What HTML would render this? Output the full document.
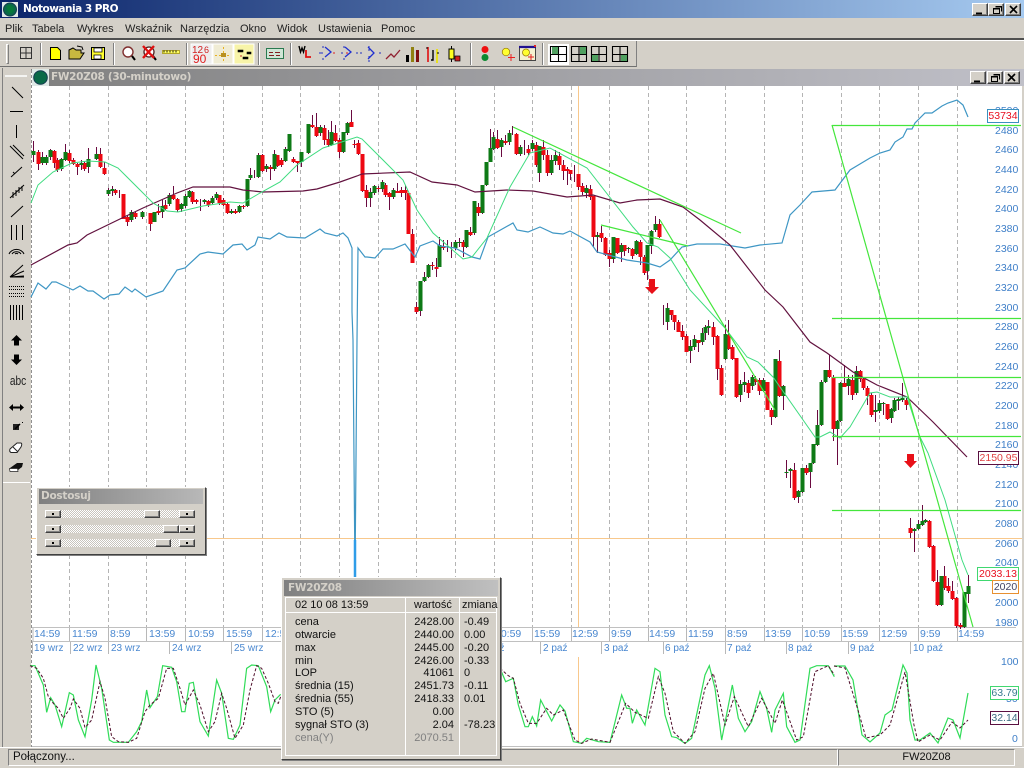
<!DOCTYPE html>
<html lang="pl"><head><meta charset="utf-8"><title>Notowania 3 PRO</title>
<style>
html,body{margin:0;padding:0;width:1024px;height:768px;overflow:hidden;background:#d4d0c8;font-family:"Liberation Sans",sans-serif}
div,span,svg{position:absolute;box-sizing:border-box}
.t{white-space:nowrap;line-height:13px}
.menu{font-size:11px;color:#222;top:23px}
.btn{width:16px;height:13px;background:#d4d0c8;border:1px solid;border-color:#fff #404040 #404040 #fff;box-shadow:inset -1px -1px 0 #808080}
.ax{font-size:10.5px;color:#3f7fc8;left:995px}
.tm{font-size:10.5px;color:#4a88d0;top:628px}
.dt{font-size:10px;color:#4a88d0;top:642px}
.box{font-size:10.5px;background:#fff;text-align:center;line-height:12px;height:14px}
.sep{width:2px;height:22px;top:43px;background:#808080;border-right:1px solid #fff}
.r{font-size:11px;color:#111;line-height:13px;white-space:nowrap}
.sb{height:8px;background:#d4d0c8;border:1px solid;border-color:#fff #404040 #404040 #fff;box-shadow:inset -1px -1px 0 #808080}
.trk{left:61px;width:118px;height:8px;background:conic-gradient(#fff 25%,#c8c4bc 0 50%,#fff 0 75%,#c8c4bc 0);background-size:2px 2px}
</style></head><body>

<!-- main title bar -->
<div style="left:0;top:0;width:1024px;height:18px;background:linear-gradient(90deg,#0a246a,#a6caf0)"></div>
<svg style="left:2px;top:2px" width="16" height="15" viewBox="0 0 16 15"><rect width="16" height="15" fill="#dfe9e6"/><circle cx="8" cy="7.5" r="6.5" fill="#0a6a48" stroke="#143c50"/><path d="M5 4l3-1 3 2 1 3-2 3-3 0-2-3z" fill="#067a3a"/></svg>
<div class="t" style="left:23px;top:3px;font:bold 10.5px 'DejaVu Sans',sans-serif;letter-spacing:-.5px;color:#fff;line-height:13px">Notowania 3 PRO</div>
<div class="btn" style="left:972px;top:3px"></div><div class="btn" style="left:988px;top:3px"></div><div class="btn" style="left:1005px;top:3px"></div>
<svg style="left:972px;top:3px" width="50" height="13" viewBox="0 0 50 13" fill="none" stroke="#000"><path d="M4 10.5h6" stroke-width="2"/><path d="M21.5 5.5h6v5h-6zM23.5 3.5h6v5M21.5 6h6M23.5 4h6" /><path d="M38 3l7 7M45 3l-7 7" stroke-width="1.6"/></svg>

<!-- menu -->
<span class="menu t" style="left:5px">Plik</span><span class="menu t" style="left:32px">Tabela</span><span class="menu t" style="left:77px">Wykres</span><span class="menu t" style="left:125px">Wskaźnik</span><span class="menu t" style="left:180px">Narzędzia</span><span class="menu t" style="left:240px">Okno</span><span class="menu t" style="left:277px">Widok</span><span class="menu t" style="left:318px">Ustawienia</span><span class="menu t" style="left:381px">Pomoc</span>
<div style="left:0;top:38px;width:1024px;height:2px;background:#505050"></div>
<div style="left:0;top:40px;width:1024px;height:1px;background:#fff"></div>

<!-- toolbar -->
<div style="left:0;top:41px;width:637px;height:26px;border-right:1px solid #808080;border-bottom:1px solid #707070"></div>
<div style="left:0;top:67px;width:1024px;height:2px;background:#d4d0c8"></div>
<div style="left:6px;top:44px;width:3px;height:20px;border:1px solid;border-color:#fff #808080 #808080 #fff"></div>
<div class="sep" style="left:40px"></div><div class="sep" style="left:113px"></div><div class="sep" style="left:186px"></div><div class="sep" style="left:258px"></div><div class="sep" style="left:290px"></div><div class="sep" style="left:470px"></div><div class="sep" style="left:542px"></div>
<svg style="left:0;top:40px" width="640" height="28" viewBox="0 40 640 28" fill="none">
<path d="M20.500 47.500h11v11h-11zM26 47v12M20 53h12" stroke="#333"/>
<path d="M50.500 47.500h7l3 3v9h-10z" fill="#ffff00" stroke="#000"/>
<path d="M69 50l4-2 3 2h5v3h3l-4 6H69z" fill="#c8b840" stroke="#000"/><path d="M77 46l5 1 1 3" stroke="#000"/>
<path d="M91.500 47.500h13v12h-13z" fill="#ffff30" stroke="#000"/><path d="M94 48h8v4h-8zM94 55h7v4h-7z" fill="#fff" stroke="#000" stroke-width=".8"/>
<circle cx="128" cy="52" r="5" fill="#fff" stroke="#803030" stroke-width="1.4"/><path d="M132 56l3 4" stroke="#000" stroke-width="2"/>
<circle cx="149" cy="52" r="5" fill="#fff" stroke="#502020" stroke-width="1.3"/><path d="M153 56l3 4" stroke="#000" stroke-width="2"/><path d="M143 46l11 12M154 46l-11 12" stroke="#e01010" stroke-width="2.4"/>
<path d="M162.500 50.500h17v3h-17z" fill="#ffff60" stroke="#a09000" stroke-width=".7"/><path d="M164 50.500v2M167 50.500v2M170 50.500v2M173 50.500v2M176 50.500v2" stroke="#000" stroke-width=".9"/>
<rect x="191" y="44" width="21" height="20" fill="#eee" stroke="#fff"/><rect x="213" y="44" width="20" height="20" fill="#f0ecd4" stroke="#fff"/><rect x="234" y="44" width="20" height="20" fill="#f8f4a8" stroke="#fff"/>
<text x="192" y="53" font-family="Liberation Sans" font-size="10" fill="#d02020">12</text><text x="204" y="53" font-family="Liberation Sans" font-size="9" fill="#d02020">6</text><text x="193" y="63" font-family="Liberation Sans" font-size="12" fill="#e02020">90</text>
<path d="M215 55.500h16M223.500 47v16" stroke="#e8b020" stroke-dasharray="2 2"/><rect x="221" y="53" width="5" height="4" fill="#b89020"/>
<path d="M238 50h5v2h-5zM247 52h4v2h-4zM243 57h5v2h-5z" fill="#000" stroke="#000" stroke-width=".6"/><path d="M240 56h2" stroke="#c03030"/>
<path d="M266.500 48.500h17v10h-17z" fill="#cfe6d6" stroke="#2a7a50"/><path d="M269 52.500h4M275 52.500h5M269 55.500h5M276 55.500h4" stroke="#802020"/>
<path d="M299 46l1.500 6 1.500-4 1.500 4 1.500-6" stroke="#000" stroke-width="1.4"/><path d="M306 50v7h5" stroke="#e01010" stroke-width="1.8"/>
<path d="M319 53h3M323 46v2M323 58v2" stroke="#2030c0"/><path d="M325 47l6 5-6 5" stroke="#2030d0" stroke-width="1.3"/><path d="M319 53h4" stroke="#2030d0" stroke-dasharray="2 1"/>
<path d="M341 53h2M344 46v2M344 58v2" stroke="#2030c0"/><path d="M345 47l6 5-6 5" stroke="#2030d0" stroke-width="1.3"/><path d="M333 53h2M346 53h2" stroke="#e02020"/>
<path d="M356 53h7M369 46v2M369 49v2M369 56v3M369 60v2M379 53h2" stroke="#2030c0" stroke-dasharray="2 2"/><path d="M368 47l6 6-6 6" stroke="#2030d0" stroke-width="1.3"/>
<path d="M386 59l5-5 3 3 6-7" stroke="#902030" stroke-width="1.3"/>
<rect x="406" y="55" width="3" height="7" fill="#000"/><rect x="411" y="47" width="3" height="15" fill="#908010"/><rect x="416" y="50" width="3" height="12" fill="#801010"/>
<path d="M428 47v15" stroke="#e01010" stroke-width="1.6"/><path d="M426 48h2" stroke="#000"/><path d="M433 50v10h-2" stroke="#000" stroke-width="1.4"/><path d="M437 49v14" stroke="#e8e020" stroke-width="2"/><path d="M437 53h2" stroke="#000"/>
<rect x="449" y="49" width="5" height="10" fill="#ffff20" stroke="#000"/><path d="M451.500 46v3M451.500 59v3" stroke="#000"/><rect x="455" y="56" width="5" height="5" fill="#d02020" stroke="#000" stroke-width=".7"/>
<circle cx="485" cy="49.500" r="3.500" fill="#ee1010"/><circle cx="485" cy="57.500" r="3.500" fill="#0a8a30"/>
<circle cx="506" cy="52" r="3.800" fill="#ffff30" stroke="#907000" stroke-width=".7"/><path d="M511 54v7M508 57.500h7" stroke="#ee2020"/>
<path d="M519.500 46.500h16v14h-16z" fill="#f6f2d0" stroke="#444"/><path d="M519 47h17" stroke="#201090" stroke-width="2.200"/><circle cx="526" cy="52.500" r="3.500" fill="#ffff30" stroke="#907000" stroke-width=".7"/><path d="M531 54v6M528 57h6" stroke="#e02020"/><rect x="534" y="45" width="2" height="2" fill="#e02020"/>
<rect x="548" y="44" width="21" height="21" fill="#fff"/>
<path d="M550.500 46.500h16v15h-16zM558.500 46v16M550 54.500h17" stroke="#000" stroke-width="1.1"/><rect x="552" y="47" width="6" height="7" fill="#50a060"/>
<path d="M571.500 46.500h15v15h-15zM579 46v16M571 54.500h16" stroke="#000" stroke-width="1.1"/><rect x="580" y="47" width="6" height="7" fill="#50a060"/>
<path d="M591.500 46.500h15v15h-15zM599 46v16M591 54.500h16" stroke="#000" stroke-width="1.1"/><rect x="592" y="55" width="6" height="6" fill="#50a060"/>
<path d="M612.500 46.500h15v15h-15zM620 46v16M612 54.500h16" stroke="#000" stroke-width="1.1"/><rect x="621" y="55" width="6" height="6" fill="#50a060"/>
</svg>

<!-- MDI title -->
<div style="left:31px;top:69px;width:993px;height:17px;background:linear-gradient(90deg,#808080,#c0c0c8)"></div>
<svg style="left:32px;top:69px" width="17" height="17" viewBox="0 0 17 17"><rect width="17" height="17" fill="#dfe9e6"/><circle cx="8.500" cy="8.500" r="6.800" fill="#0a6a48" stroke="#143c50"/></svg>
<div class="t" style="left:51px;top:71px;font:bold 10.5px 'DejaVu Sans',sans-serif;letter-spacing:-.3px;line-height:13px;color:#d4d0c8">FW20Z08 (30-minutowo)</div>
<div class="btn" style="left:970px;top:71px"></div><div class="btn" style="left:987px;top:71px"></div><div class="btn" style="left:1004px;top:71px"></div>
<svg style="left:970px;top:71px" width="50" height="13" viewBox="0 0 50 13" fill="none" stroke="#000"><path d="M4 10.500h6" stroke-width="2"/><path d="M21.500 5.500h6v5h-6zM23.500 3.500h6v5M21.500 6h6M23.500 4h6"/><path d="M38 3l7 7M45 3l-7 7" stroke-width="1.600"/></svg>

<!-- chart white area -->
<div style="left:31px;top:86px;width:991px;height:660px;background:#fff"></div>

<!-- left strip -->
<div style="left:2px;top:68px;width:1px;height:680px;background:#808080"></div>
<div style="left:3px;top:482px;width:27px;height:1px;background:#fff"></div>
<svg style="left:3px;top:70px" width="27" height="412" viewBox="3 70 27 412" fill="none" stroke="#000">
<path d="M5 76h22" stroke="#fff" stroke-width="1.500"/>
<path d="M12 87l11 11M10 111.500h13M16.500 125v13M10 146l13 13M13 145l11 11M11 177l11-10M13 172l2 2M10 198l14-13M13 192v6M16 190v6M19 187v6M22 186v5M11 217l12-11M11.500 225v15M16.500 225v15M22.500 225v15"/>
<path d="M9 254a8 7 0 0 1 15 0M12 254a5 4 0 0 1 9 0M15 254a2 2 0 0 1 3 0"/>
<path d="M10 277l13-12M10 277l14-6M10 277l14-1M10 277h14"/>
<path d="M9 286.500h15M9 289.500h15M9 293.500h15M9 296.500h15" stroke-dasharray="1 1"/>
<path d="M10.500 305v15M13.500 305v15M16.500 305v15M19.500 305v15M22.500 305v15"/>
<path d="M16.500 335l-5.500 5.500h3v5h5v-5h3z" fill="#000" stroke="none"/>
<path d="M16.500 365l-5.500-5.500h3v-5h5v5h3z" fill="#000" stroke="none"/>
<path d="M9 407.500l4-3.500v7zM24 407.500l-4-3.500v7z" fill="#000" stroke="none"/><path d="M13 407.500h7" stroke-width="2"/>
<path d="M13 424h6v6h-6z" fill="#202020" stroke="none"/><path d="M15 429l5-5" stroke-width="1.500"/><path d="M22 422.500h1"/>
<path d="M10 449l7-6h4q1.500.500 0 4l-4 5.500h-6q-2-1-1-3.500z" fill="#fff" stroke="#222"/><path d="M13 447l5 5" stroke="#222"/>
<path d="M10 468l7-5h6l-1 4-4 3h-8z" fill="#111" stroke="none"/><path d="M9.500 468.500h8l.5 3H10z" fill="#fff" stroke="#222" stroke-width=".7"/>
</svg>
<div class="t" style="left:8px;top:374px;width:17px;text-align:center;font-size:13px;color:#222;transform:scaleX(.78)">abc</div>
<div style="left:31px;top:70px;width:1px;height:680px;background:repeating-linear-gradient(#909090 0 3px,#fff 3px 5px)"></div>

<!-- chart -->
<svg style="left:0;top:0" width="1024" height="768" viewBox="0 0 1024 768" fill="none">
<path stroke="#b4b4b4" stroke-dasharray="4 3" d="M69.500 86V627M108.500 86V627M146.500 86V627M185.500 86V627M223.500 86V627M262.500 86V627M300.500 86V627M339.500 86V627M378.500 86V627M416.500 86V627M455.500 86V627M494.500 86V627M532.500 86V627M571.500 86V627M609.500 86V627M648.500 86V627M686.500 86V627M725.500 86V627M764.500 86V627M802.500 86V627M841.500 86V627M879.500 86V627M918.500 86V627M957.500 86V627"/>
<path stroke="#f8c88c" d="M578.500 86V627M31 538.500H1022M578.500 657V743"/>
<!-- axis lines -->
<path stroke="#c0c0c0" d="M32 627.500H1016M32 641.500H1022M32 746.500H1022"/>
<path stroke="#b8b8b8" d="M33 628V641M69.500 628V641M108.500 628V641M146.500 628V641M185.500 628V641M223.500 628V641M262.500 628V641M300.500 628V641M339.500 628V641M378.500 628V641M416.500 628V641M455.500 628V641M494.500 628V641M532.500 628V641M571.500 628V641M609.500 628V641M648.500 628V641M686.500 628V641M725.500 628V641M764.500 628V641M802.500 628V641M841.500 628V641M879.500 628V641M918.500 628V641M957.500 628V641M32.500 642V654M70.500 642V654M108.500 642V654M169.500 642V654M231.500 642V654M540.500 642V654M601.500 642V654M663.500 642V654M725.500 642V654M786.500 642V654M848.500 642V654M910.500 642V654M501 642V654"/>
<!-- wicks -->
<path stroke="#6a0a40" d="M33.500 141V162M38.500 150V170M42.500 152V165M46.500 155V165M50.500 149V160M54.500 150V168M57.500 158V172M61.500 158V171M65.500 144V161M69.500 150V163M73.500 158V165M77.500 163V175M81.500 160V170M84.500 161V171M88.500 148V173M96.500 147V160M100.500 148V168M104.500 162V175M108.500 188V196M112.500 186V196M115.500 189V195M119.500 190V198M123.500 194V219M127.500 215V226M131.500 210V222M135.500 212V219M142.500 211V219M150.500 213V231M154.500 212V222M158.500 204V215M162.500 200V218M165.500 200V210M169.500 193V206M173.500 186V200M177.500 198V212M181.500 203V212M185.500 194V208M189.500 190V198M192.500 191V204M196.500 199V204M200.500 199V211M204.500 199V204M208.500 200V207M212.500 196V204M216.500 192V200M219.500 195V205M223.500 198V206M227.500 203V214M231.500 209V214M235.500 209V214M239.500 205V213M243.500 205V209M247.500 179V207M250.500 168V180M254.500 170V178M258.500 153V178M262.500 154V172M266.500 164V172M270.500 165V180M274.500 150V171M277.500 155V167M281.500 158V167M285.500 147V162M289.500 134V152M293.500 157V163M297.500 161V172M301.500 152V167M308.500 124V154M312.500 115V128M316.500 113V137M320.500 125V136M324.500 125V145M328.500 130V147M331.500 121V146M335.500 125V142M339.500 138V158M343.500 132V153M347.500 122V135M351.500 110V127M354.500 140V148M358.500 140V155M362.500 154V192M366.500 185V207M370.500 188V207M374.500 185V195M378.500 186V192M382.500 180V192M385.500 183V197M389.500 192V210M393.500 188V199M397.500 183V193M401.500 187V197M405.500 185V200M408.500 193V234M412.500 229V263M416.500 302V314M420.500 281V316M424.500 272V282M428.500 264V278M432.500 262V270M436.500 258V277M439.500 237V267M443.500 240V250M447.500 240V252M451.500 242V258M455.500 240V250M459.500 238V247M463.500 240V257M466.500 230V248M470.500 227V236M474.500 201V235M478.500 203V216M482.500 185V214M486.500 162V186M490.500 129V162M493.500 132V150M497.500 130V149M501.500 138V157M505.500 135V145M509.500 130V145M512.500 126V135M516.500 133V155M520.500 145V156M524.500 140V155M528.500 145V155M532.500 140V151M536.500 142V167M539.500 146V182M543.500 140V160M547.500 150V176M551.500 155V175M555.500 150V165M559.500 152V170M563.500 160V180M567.500 167V185M570.500 170V180M574.500 165V182M578.500 174V190M582.500 183V195M586.500 185V198M590.500 185V200M593.500 196V247M597.500 232V253M601.500 226V242M605.500 237V256M609.500 250V267M613.500 237V263M617.500 238V254M621.500 243V262M624.500 245V256M628.500 247V253M632.500 248V259M636.500 240V255M640.500 240V265M644.500 255V275M647.500 245V280M651.500 230V254M655.500 216V232M659.500 219V238M663.500 305V325M667.500 303V330M671.500 310V320M674.500 315V330M678.500 320V332M682.500 325V340M686.500 334V352M690.500 340V363M694.500 335V350M698.500 340V352M702.500 328V345M705.500 325V340M708.500 320V335M713.500 322V345M717.500 335V380M721.500 365V396M725.500 325V360M728.500 320V350M732.500 345V360M736.500 358V398M740.500 380V402M744.500 372V392M748.500 380V398M752.500 375V390M755.500 376V385M759.500 378V395M763.500 378V392M767.500 382V410M771.500 408V425M775.500 359V418M779.500 350V397M783.500 385V410M786.500 460V478M790.500 468V488M794.500 463V500M798.500 490V503M802.500 468V493M806.500 465V475M810.500 463V488M813.500 444V464M817.500 410V446M821.500 380V426M825.500 370V383M829.500 355V378M833.500 375V441M837.500 420V465M840.500 382V422M844.500 365V385M848.500 375V395M852.500 375V400M856.500 366V395M860.500 370V382M863.500 378V390M867.500 386V405M871.500 393V417M875.500 395V422M879.500 400V413M883.500 402V415M887.500 404V420M891.500 408V423M894.500 398V412M898.500 397V410M902.500 383V402M906.500 398V410M910.500 518V538M914.500 528V552M918.500 520V530M922.500 505V526M925.500 519V523M929.500 520V548M933.500 545V582M937.500 570V606M941.500 576V606M944.500 566V590M948.500 578V593M952.500 581V600M956.500 597V628M960.500 623V629M964.500 592V628M968.500 575V603"/>
<!-- red bodies -->
<path stroke="#ee0812" stroke-width="4" d="M38.500 152V164M54.500 151V163M57.500 160V170M69.500 153V161M73.500 160V164M77.500 164V167M84.500 163V169M100.500 154V167M104.500 168V174M115.500 190V193M123.500 194V219M127.500 217V222M135.500 213V217M150.500 213V224M158.500 211V213M165.500 205V209M173.500 195V199M177.500 199V210M192.500 192V202M196.500 200V202M208.500 201V205M219.500 195V203M223.500 200V205M227.500 204V213M235.500 211V213M243.500 206V207M262.500 155V171M270.500 167V169M277.500 155V166M281.500 160V165M293.500 159V162M297.500 161V163M312.500 125V127M316.500 127V136M324.500 128V140M328.500 139V145M335.500 133V141M339.500 140V152M351.500 122V127M354.500 144V145M358.500 143V154M362.500 154V191M366.500 190V198M378.500 188V189M385.500 185V195M389.500 193V197M397.500 191V193M401.500 190V193M405.500 190V193M408.500 193V234M412.500 234V263M416.500 307V312M432.500 265V266M436.500 267V269M443.500 246V248M451.500 247V248M463.500 242V247M470.500 232V235M478.500 207V213M497.500 139V148M505.500 141V143M516.500 134V154M528.500 149V153M536.500 145V165M543.500 147V155M547.500 155V173M559.500 156V165M563.500 165V171M567.500 169V171M570.500 170V174M578.500 174V187M582.500 186V192M590.500 189V197M593.500 196V237M601.500 233V238M605.500 238V255M609.500 253V259M617.500 238V253M624.500 245V251M632.500 249V256M640.500 242V257M644.500 257V273M659.500 224V237M671.500 310V315M674.500 315V322M678.500 322V332M682.500 331V337M686.500 336V352M698.500 340V343M713.500 327V337M717.500 336V369M721.500 368V395M728.500 335V349M732.500 347V359M736.500 358V397M748.500 383V393M755.500 379V382M759.500 380V391M767.500 382V410M771.500 410V417M779.500 361V396M794.500 470V498M806.500 468V473M829.500 370V377M833.500 377V429M844.500 383V387M852.500 380V395M860.500 371V379M863.500 379V388M867.500 388V396M871.500 395V415M887.500 404V419M906.500 400V405M910.500 528V533M929.500 521V547M933.500 546V581M937.500 582V605M944.500 576V588M948.500 586V591M952.500 591V599M956.500 598V626M960.500 625V627"/>
<!-- green bodies -->
<path stroke="#0e7a16" stroke-width="4" d="M33.500 151V155M42.500 157V163M46.500 157V163M50.500 150V157M61.500 159V169M65.500 152V160M81.500 163V165M88.500 159V167M96.500 154V159M108.500 190V194M112.500 189V191M131.500 212V220M142.500 212V217M154.500 212V222M162.500 206V212M169.500 195V204M181.500 204V209M185.500 196V206M189.500 191V197M204.500 200V202M212.500 198V203M216.500 194V198M231.500 211V213M239.500 206V212M247.500 179V206M250.500 175V178M258.500 155V177M266.500 166V169M274.500 154V169M285.500 149V161M289.500 134V151M301.500 152V162M308.500 124V153M320.500 127V133M331.500 132V145M343.500 132V152M347.500 123V133M370.500 192V198M374.500 186V193M382.500 182V189M393.500 190V197M420.500 281V311M424.500 277V281M428.500 265V277M439.500 245V267M455.500 242V248M459.500 242V243M466.500 230V247M474.500 201V233M482.500 185V213M486.500 162V185M490.500 148V162M493.500 137V149M501.500 140V147M509.500 133V142M520.500 147V154M532.500 143V149M539.500 146V173M551.500 160V173M555.500 155V161M586.500 188V193M597.500 235V237M613.500 237V259M621.500 245V252M628.500 248V249M636.500 241V254M647.500 245V271M651.500 231V246M655.500 224V230M667.500 308V322M690.500 346V351M694.500 339V347M702.500 333V342M705.500 327V333M708.500 326V328M725.500 334V359M740.500 384V395M744.500 382V385M752.500 377V386M763.500 380V391M775.500 359V417M783.500 386V396M786.500 472V473M790.500 469V471M798.500 491V497M802.500 468V492M810.500 463V472M813.500 444V463M817.500 425V445M821.500 382V425M825.500 370V382M837.500 421V429M840.500 383V421M848.500 379V386M856.500 371V393M875.500 410V412M879.500 403V411M883.500 403V404M891.500 409V418M894.500 400V411M898.500 399V401M902.500 398V400M914.500 529V531M918.500 524V529M922.500 521V525M925.500 520V522M941.500 576V605M964.500 592V627M968.500 586V594"/>
<!-- blue line -->
<polyline stroke="#3e96c4" stroke-width="1.200" points="31,297 38,283 46,289 52,282 56,282 73,290 80,286 88,291 93,291 104,299 110,295 119,294 125,287 132,292 135,289 146,297 163,291 177,270 185,268 200,254 208,252 223,254 233,245 242,244 247,250 255,245 258,237 270,239 279,233 287,237 305,238 320,229 325,233 337,236 343,233 348,238 352,248 352,312 353,340 355,578 357,340 358,248 365,257 367,257 375,258 383,249 393,249 405,244 415,257 420,246 433,241 440,246 455,248 472,257 480,259 488,237 513,223 517,230 528,232 540,227 553,233 563,234 570,231 590,242 597,252 627,260 647,263 660,267 670,260 682,247 697,244 720,244 745,248 760,245 782,243 790,215 800,205 812,192 835,190 850,170 870,158 880,153 890,150 895,142 903,137 907,129 912,129 915,123 925,113 932,113 942,106 948,103 957,100 963,105 968,117"/>
<path stroke="#2f9de8" stroke-width="2.500" d="M355 540V578"/>
<!-- purple line -->
<polyline stroke="#62123f" stroke-width="1.200" points="31,265 68,245 77,243 87,235 122,218 143,208 177,193 193,187 230,187 243,190 263,192 303,191 317,189 340,182 357,176 362,174 410,172 432,182 457,185 475,192 507,190 533,191 567,197 593,195 620,203 637,200 660,199 683,207 700,220 730,245 765,290 783,307 810,342 827,353 853,372 877,385 907,397 933,422 967,457"/>
<!-- MA green -->
<polyline stroke="#3fdc80" points="31,203 38,185 53,172 72,163 88,161 105,162 118,168 153,203 167,211 178,212 203,206 230,202 243,203 260,193 280,182 297,165 323,148 357,137 362,139 403,180 417,210 433,233 463,259 472,257 487,238 510,187 530,153 550,148 587,168 633,227 647,243 658,247 670,258 690,290 725,328 747,357 758,362 773,377 815,437 820,437 830,432 840,438 850,427 870,393 877,392 890,397 907,397 920,437 928,453 945,500 962,560 968,575"/>
<!-- trend lines -->
<path stroke="#44e63c" stroke-width="1.200" d="M513 127L741 233M601 225L688 246M660 220L775 410M832 125L973 627M832 125.500H1021M832 318.500H1021M832 377.500H1021M832 436.500H1021M832 510.500H1021"/>
<!-- red arrows -->
<path fill="#e81018" d="M649 279h6v8h4l-7 7-7-7h4zM907 454h7v7h3l-6.500 7-6.500-7h3z"/>
<!-- oscillator -->
<g transform="translate(30 625) scale(.33333)">
<polyline vector-effect="non-scaling-stroke" stroke="#30dc58" stroke-width="1.200" points="0,122 15,122 40,180 50,262 62,218 75,240 95,305 118,203 130,210 145,285 165,335 185,225 198,120 215,190 238,345 250,352 295,352 320,320 335,290 350,195 360,248 382,215 398,122 425,127 440,170 455,260 465,260 478,175 490,172 510,290 535,333 560,165 575,205 595,340 610,343 630,300 650,130 665,120 685,122 710,185 722,260 735,225 752,208"/>
<polyline vector-effect="non-scaling-stroke" stroke="#50102c" stroke-dasharray="3 2" points="0,122 20,130 40,160 55,215 70,235 85,250 100,280 120,250 130,222 150,250 165,308 185,285 210,170 225,220 245,335 265,350 295,352 320,340 345,260 360,240 385,220 410,130 430,130 450,190 465,240 490,195 510,240 535,320 555,290 575,205 590,250 615,340 640,300 660,195 680,122 695,130 715,175 735,230 745,235 752,215"/>
</g>
<g transform="translate(495 625) scale(.33333)">
<polyline vector-effect="non-scaling-stroke" stroke="#30dc58" stroke-width="1.200" points="15,130 32,170 55,160 70,240 90,305 100,305 112,275 125,303 137,225 170,288 195,240 210,258 235,350 260,355 275,340 310,350 345,352 380,210 395,250 405,250 412,295 425,255 450,300 480,130 495,140 510,270 530,335 545,338 570,355 590,340 630,150 643,122 660,190 680,345 712,180 730,280 750,320 770,290 795,200 815,250 830,322 840,255 865,205 875,305 900,352 915,345 945,130 965,122 1000,122 1018,155"/>
<polyline vector-effect="non-scaling-stroke" stroke="#50102c" stroke-dasharray="3 2" points="15,130 40,152 55,160 75,235 100,295 125,295 155,250 175,270 205,255 240,345 260,355 290,342 345,352 370,290 392,235 420,262 460,280 490,155 510,205 535,320 570,355 600,320 630,190 655,145 690,300 718,215 760,305 800,220 840,295 862,225 905,345 925,335 960,140 1000,122 1018,150"/>
</g>
<polyline stroke="#30dc58" stroke-width="1.200" points="834,666 845,666 853,680 862,735 870,742 880,733 885,715 892,710 903,665 907,673 910,720 915,740 920,740 930,733 938,743 948,718 953,720 960,738 968,693"/>
<polyline stroke="#50102c" stroke-dasharray="3 2" points="834,666 845,668 858,710 866,738 880,735 890,725 905,672 914,725 918,742 930,735 940,740 952,722 960,728 968,720"/>
</svg>

<!-- right axis labels -->
<span class="ax t" style="top:105px">2500</span><span class="ax t" style="top:125px">2480</span><span class="ax t" style="top:144px">2460</span><span class="ax t" style="top:164px">2440</span><span class="ax t" style="top:184px">2420</span><span class="ax t" style="top:203px">2400</span><span class="ax t" style="top:223px">2380</span><span class="ax t" style="top:243px">2360</span><span class="ax t" style="top:262px">2340</span><span class="ax t" style="top:282px">2320</span><span class="ax t" style="top:302px">2300</span><span class="ax t" style="top:321px">2280</span><span class="ax t" style="top:341px">2260</span><span class="ax t" style="top:361px">2240</span><span class="ax t" style="top:380px">2220</span><span class="ax t" style="top:400px">2200</span><span class="ax t" style="top:420px">2180</span><span class="ax t" style="top:439px">2160</span><span class="ax t" style="top:459px">2140</span><span class="ax t" style="top:479px">2120</span><span class="ax t" style="top:498px">2100</span><span class="ax t" style="top:518px">2080</span><span class="ax t" style="top:538px">2060</span><span class="ax t" style="top:557px">2040</span><span class="ax t" style="top:597px">2000</span><span class="ax t" style="top:617px">1980</span>
<span class="ax t" style="left:1001px;top:656px">100</span><span class="ax t" style="left:1006px;top:693px">50</span><span class="ax t" style="left:1012px;top:733px">0</span>

<!-- value boxes -->
<div class="box" style="left:987px;top:109px;width:32px;border:1px solid #3a90c0;color:#e81020">53734</div>
<div class="box" style="left:978px;top:451px;width:41px;border:1px solid #5a1040;color:#e04040">2150.95</div>
<div class="box" style="left:977px;top:567px;width:42px;border:1px solid #40d870;color:#e81020">2033.13</div>
<div class="box" style="left:992px;top:580px;width:27px;border:1px solid #e89030;color:#446">2020</div>
<div class="box" style="left:990px;top:686px;width:29px;border:1px solid #40d870;color:#3a7a90">63.79</div>
<div class="box" style="left:990px;top:711px;width:29px;border:1px solid #5a1040;color:#3a6a80">32.14</div>

<!-- time labels -->
<span class="tm t" style="left:34px">14:59</span><span class="tm t" style="left:72px">11:59</span><span class="tm t" style="left:110px">8:59</span><span class="tm t" style="left:149px">13:59</span><span class="tm t" style="left:188px">10:59</span><span class="tm t" style="left:226px">15:59</span><span class="tm t" style="left:265px">12:59</span><span class="tm t" style="left:495px">10:59</span><span class="tm t" style="left:534px">15:59</span><span class="tm t" style="left:572px">12:59</span><span class="tm t" style="left:611px">9:59</span><span class="tm t" style="left:649px">14:59</span><span class="tm t" style="left:688px">11:59</span><span class="tm t" style="left:727px">8:59</span><span class="tm t" style="left:765px">13:59</span><span class="tm t" style="left:804px">10:59</span><span class="tm t" style="left:842px">15:59</span><span class="tm t" style="left:881px">12:59</span><span class="tm t" style="left:920px">9:59</span><span class="tm t" style="left:958px">14:59</span>
<span class="dt t" style="left:34px">19 wrz</span><span class="dt t" style="left:73px">22 wrz</span><span class="dt t" style="left:111px">23 wrz</span><span class="dt t" style="left:172px">24 wrz</span><span class="dt t" style="left:234px">25 wrz</span><span class="dt t" style="left:480px">1 paź</span><span class="dt t" style="left:543px">2 paź</span><span class="dt t" style="left:604px">3 paź</span><span class="dt t" style="left:665px">6 paź</span><span class="dt t" style="left:727px">7 paź</span><span class="dt t" style="left:788px">8 paź</span><span class="dt t" style="left:850px">9 paź</span><span class="dt t" style="left:913px">10 paź</span>

<!-- Dostosuj -->
<div style="left:36px;top:487px;width:170px;height:68px;background:#d4d0c8;border:1px solid;border-color:#fff #404040 #404040 #fff;box-shadow:inset 0 0 0 1px #d4d0c8,1px 1px 0 #808080"></div>
<div style="left:39px;top:489px;width:164px;height:15px;background:linear-gradient(90deg,#808080,#b8b8b8)"></div>
<div class="t" style="left:41px;top:490px;font:bold 10.500px 'DejaVu Sans',sans-serif;letter-spacing:-.25px;line-height:13px;color:#d4d0c8">Dostosuj</div>
<div class="trk" style="top:510px"></div><div class="trk" style="top:525px"></div><div class="trk" style="top:539px"></div>
<div class="sb" style="left:45px;top:510px;width:16px"></div><div class="sb" style="left:179px;top:510px;width:16px"></div><div class="sb" style="left:144px;top:510px;width:16px"></div>
<div class="sb" style="left:45px;top:525px;width:16px"></div><div class="sb" style="left:179px;top:525px;width:16px"></div><div class="sb" style="left:163px;top:525px;width:16px"></div>
<div class="sb" style="left:45px;top:539px;width:16px"></div><div class="sb" style="left:179px;top:539px;width:16px"></div><div class="sb" style="left:155px;top:539px;width:16px"></div>
<svg style="left:0;top:500px" width="210" height="60" viewBox="0 500 210 60"><path fill="#000" d="M52 513h2v2h-2zM186 513h2v2h-2zM52 528h2v2h-2zM186 528h2v2h-2zM52 542h2v2h-2zM186 542h2v2h-2z"/></svg>

<!-- status bar -->
<div style="left:0;top:747px;width:1024px;height:21px;background:#d4d0c8;border-top:1px solid #fff"></div>
<div style="left:8px;top:749px;width:830px;height:17px;border:1px solid;border-color:#808080 #fff #fff #808080"></div>
<div style="left:838px;top:749px;width:177px;height:17px;border:1px solid;border-color:#808080 #fff #fff #808080"></div>
<div class="t" style="left:13px;top:751px;font-size:11.500px;color:#111">Połączony...</div>
<div class="t" style="left:838px;top:751px;width:177px;text-align:center;font-size:11px;color:#111">FW20Z08</div>

<!-- FW20Z08 info panel -->
<div style="left:281px;top:577px;width:220px;height:183px;background:#d4d0c8;border:1px solid;border-color:#fff #404040 #404040 #fff;box-shadow:1px 1px 0 #808080"></div>
<div style="left:284px;top:580px;width:214px;height:16px;background:linear-gradient(90deg,#808080,#c0c0c0)"></div>
<div class="t" style="left:288px;top:582px;font:bold 10.500px 'DejaVu Sans',sans-serif;letter-spacing:-.25px;line-height:13px;color:#d4d0c8">FW20Z08</div>
<div style="left:285px;top:597px;width:212px;height:159px;border:1px solid #fff;border-top:1px solid #fff"></div>
<div style="left:405px;top:597px;width:1px;height:159px;background:#fff"></div>
<div style="left:459px;top:597px;width:1px;height:159px;background:#fff"></div>
<div style="left:285px;top:612px;width:212px;height:1px;background:#fff"></div>
<span class="r" style="left:295px;top:599px">02 10 08 13:59</span><span class="r" style="left:414px;top:599px">wartość</span><span class="r" style="left:462px;top:599px">zmiana</span>
<span class="r" style="left:295px;top:616px">cena</span><span class="r" style="left:400px;top:616px;width:54px;text-align:right">2428.00</span><span class="r" style="left:464px;top:616px">-0.49</span>
<span class="r" style="left:295px;top:629px">otwarcie</span><span class="r" style="left:400px;top:629px;width:54px;text-align:right">2440.00</span><span class="r" style="left:464px;top:629px">0.00</span>
<span class="r" style="left:295px;top:642px">max</span><span class="r" style="left:400px;top:642px;width:54px;text-align:right">2445.00</span><span class="r" style="left:464px;top:642px">-0.20</span>
<span class="r" style="left:295px;top:655px">min</span><span class="r" style="left:400px;top:655px;width:54px;text-align:right">2426.00</span><span class="r" style="left:464px;top:655px">-0.33</span>
<span class="r" style="left:295px;top:667px">LOP</span><span class="r" style="left:400px;top:667px;width:54px;text-align:right">41061</span><span class="r" style="left:464px;top:667px">0</span>
<span class="r" style="left:295px;top:680px">średnia (15)</span><span class="r" style="left:400px;top:680px;width:54px;text-align:right">2451.73</span><span class="r" style="left:464px;top:680px">-0.11</span>
<span class="r" style="left:295px;top:693px">średnia (55)</span><span class="r" style="left:400px;top:693px;width:54px;text-align:right">2418.33</span><span class="r" style="left:464px;top:693px">0.01</span>
<span class="r" style="left:295px;top:706px">STO (5)</span><span class="r" style="left:400px;top:706px;width:54px;text-align:right">0.00</span>
<span class="r" style="left:295px;top:719px">sygnał STO (3)</span><span class="r" style="left:400px;top:719px;width:54px;text-align:right">2.04</span><span class="r" style="left:464px;top:719px;width:32px;overflow:hidden">-78.23</span>
<span class="r" style="left:295px;top:732px;color:#808080">cena(Y)</span><span class="r" style="left:400px;top:732px;width:54px;text-align:right;color:#808080">2070.51</span>
</body></html>
